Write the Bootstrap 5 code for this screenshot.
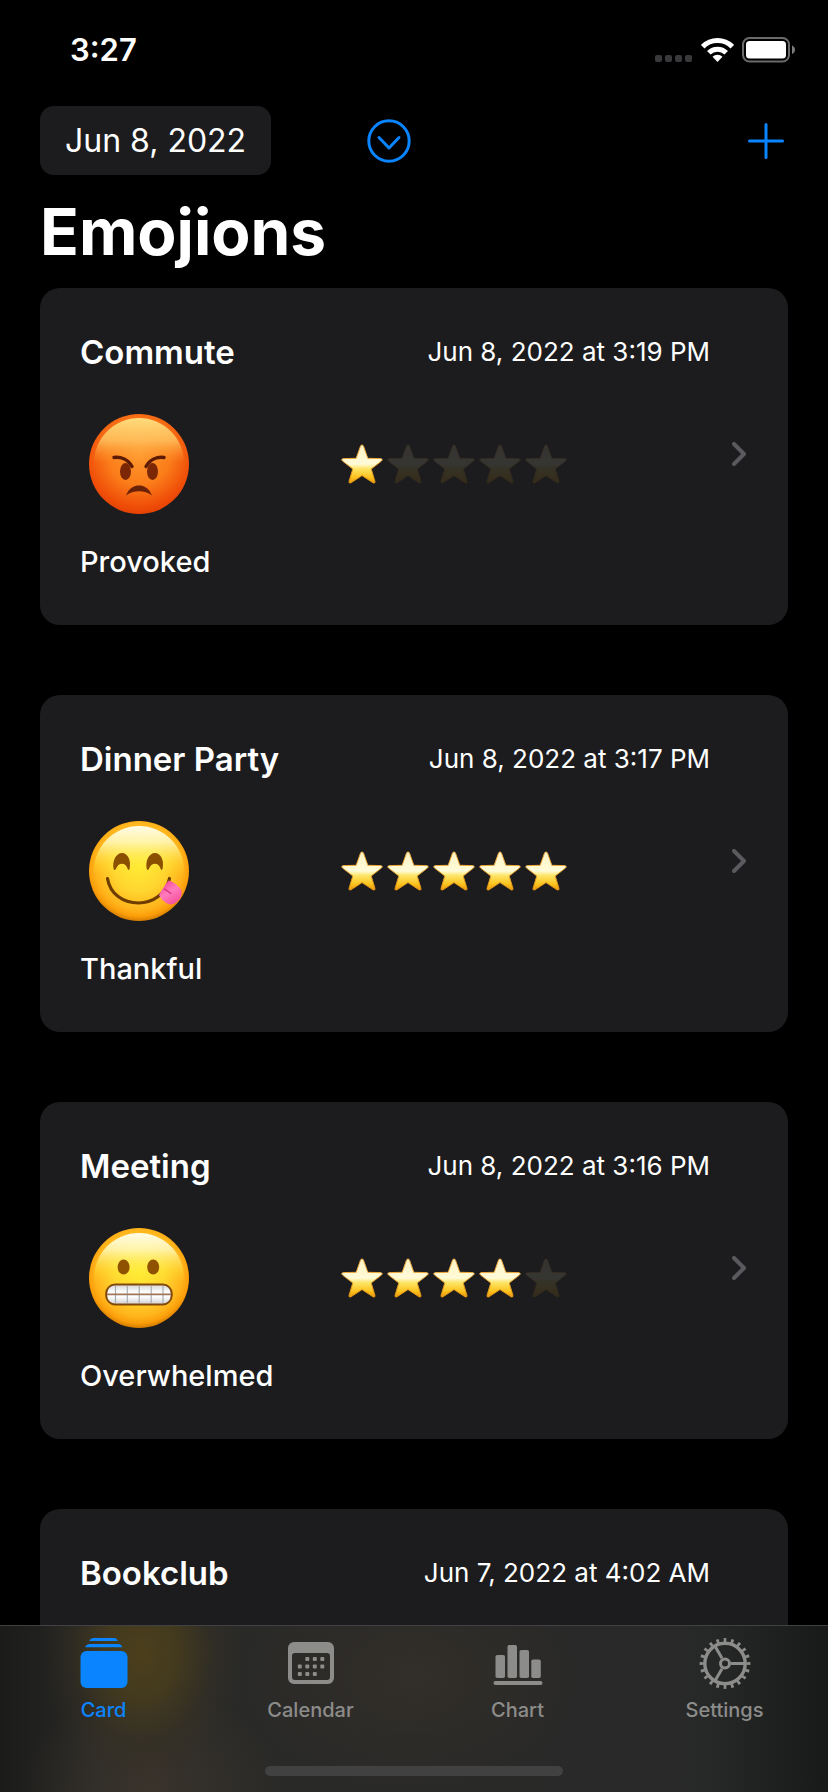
<!DOCTYPE html>
<html lang="en" data-bs-theme="dark">
<head>
<meta charset="utf-8">
<meta name="viewport" content="width=device-width, initial-scale=1">
<title>Emojions</title>
<link href="https://cdn.jsdelivr.net/npm/bootstrap@5.3.0/dist/css/bootstrap.min.css" rel="stylesheet">
<style>
  :root { --tint: #0a84ff; --panel: #1c1c1e; --muted: #8c8c8a; }
  body { background: #000; color: #fff; font-family: Inter, "Liberation Sans", sans-serif; }
  svg { display: block; flex: none; }
  .app { height: 100vh; }
  .statusbar { height: 100px; padding: 0 32px 0 70px; }
  .clock { font-size: 31px; line-height: 40px; }
  .toolbar { padding: 6px 40px 0; }
  .btn-date { background: var(--panel); color: #fff; font-size: 32px; line-height: 41px; padding: 14px 25px; border: 0; border-radius: 14px; }
  .btn-date:hover { background: #2c2c2e; color: #fff; }
  .btn-tint { color: var(--tint); border: 0; padding: 0; }
  .btn-expand { margin-left: 96px; }
  .page-title { font-size: 64px; line-height: 72px; padding: 21px 40px 20px; }
  .entries { min-height: 0; overflow-y: auto; gap: 70px; padding: 0 40px; scrollbar-width: none; }
  .entries::-webkit-scrollbar { display: none; }
  .entry { background: var(--panel); color: #fff; border-radius: 20px; padding: 40px 42px 45px 40px; gap: 22px; flex: none; }
  .entry-name { font-size: 33px; line-height: 48px; }
  .entry-time { font-size: 26px; line-height: 48px; }
  .entry-head-only { padding-right: 36px; padding-bottom: 24px; }
  .entry-body { margin: 28px 0 20px; }
  .entry-face { width: 118px; height: 120px; }
  .entry-mood { font-size: 29px; line-height: 36px; }
  .rating { gap: 4px; }
  .rating .off { opacity: .11; }
  .chev { color: #5a5a5e; }
  .tabbar {
    border-top: 1px solid #414143; padding-top: 12px; height: 167px; flex: none;
    background:
      radial-gradient(ellipse 100px 125px at 142px 28px, #4b3f1b, #493d1cd0 35%, #3a331f60 70%, #2a2a2800),
      radial-gradient(ellipse 130px 100px at 150px 160px, #39332b, #39332b00),
      radial-gradient(ellipse 170px 120px at 50% 50px, #322e28, #322e2800),
      linear-gradient(90deg, #1b1b1a, #2a2a28 13%, #292929 80%, #262827 86%, #181919);
  }
  .tab { color: var(--muted); font-size: 20px; line-height: 24px; gap: 8px; }
  .tab.active { color: var(--tint); }
  .home-bar { width: 36%; height: 10px; border-radius: 5px; background: #414141; margin-bottom: 16px; }
</style>
</head>
<body>
<svg width="0" height="0" class="position-absolute" aria-hidden="true">
  <defs>
    <linearGradient id="gStar" x1="0" y1="0" x2="0" y2="1">
      <stop offset="0" stop-color="#fff3c4"/><stop offset=".5" stop-color="#fffbd8"/><stop offset=".62" stop-color="#fde567"/><stop offset=".85" stop-color="#fcc21c"/><stop offset="1" stop-color="#e8960f"/>
    </linearGradient>
    <linearGradient id="gStarEdge" x1="0" y1="0" x2="0" y2="1">
      <stop offset="0" stop-color="#f5b04a"/><stop offset="1" stop-color="#e09413"/>
    </linearGradient>
    <radialGradient id="gYellow" cx=".5" cy=".45" r=".56">
      <stop offset="0" stop-color="#ffea35"/><stop offset=".45" stop-color="#ffd62f"/><stop offset=".78" stop-color="#ffb41c"/><stop offset=".9" stop-color="#fb9d08"/><stop offset="1" stop-color="#c97300"/>
    </radialGradient>
    <radialGradient id="gRed" cx=".5" cy=".4" r=".62">
      <stop offset="0" stop-color="#ff9a30"/><stop offset=".5" stop-color="#fb7d1a"/><stop offset=".85" stop-color="#ef4e08"/><stop offset="1" stop-color="#e33f02"/>
    </radialGradient>
    <linearGradient id="gShineY" x1="0" y1="0" x2="0" y2="1">
      <stop offset="0" stop-color="#fffde8"/><stop offset=".18" stop-color="#fffac0" stop-opacity=".85"/><stop offset=".45" stop-color="#fff23a" stop-opacity=".2"/><stop offset=".55" stop-color="#ffee30" stop-opacity="0"/>
    </linearGradient>
    <linearGradient id="gShineR" x1="0" y1="0" x2="0" y2="1">
      <stop offset="0" stop-color="#ffdc7c"/><stop offset=".25" stop-color="#ffc663" stop-opacity=".8"/><stop offset=".5" stop-color="#ff9a30" stop-opacity="0"/>
    </linearGradient>
    <linearGradient id="gTeeth" x1="0" y1="0" x2="0" y2="1">
      <stop offset="0" stop-color="#d5d5d8"/><stop offset=".4" stop-color="#fff"/><stop offset=".6" stop-color="#fff"/><stop offset="1" stop-color="#cfcfd2"/>
    </linearGradient>
    <linearGradient id="gTongue" x1="0" y1="0" x2=".6" y2="1">
      <stop offset="0" stop-color="#f0368c"/><stop offset=".55" stop-color="#ff7cbc"/><stop offset="1" stop-color="#f4549f"/>
    </linearGradient>
  </defs>
  <symbol id="star" viewBox="0 0 42 40">
    <path d="M21 1c.7 0 1.200.4 1.500 1.200L26.800 14.300 39.600 14.600c1.700.1 2.100 1.500.8 2.500L30.200 25l3.700 12.200c.5 1.600-.7 2.400-2 1.500L21 31.600 10.100 38.700c-1.300.9-2.500.1-2-1.500L11.800 25 1.600 17.100C.3 16.100.7 14.700 2.400 14.600L15.200 14.300 19.500 2.200C19.800 1.400 20.300 1 21 1Z" fill="url(#gStar)" stroke="url(#gStarEdge)" stroke-width="1"/>
  </symbol>
  <symbol id="chevron" viewBox="0 0 14 24">
    <path d="M2 2l10 10L2 22" fill="none" stroke="currentColor" stroke-width="4" stroke-linecap="round" stroke-linejoin="round"/>
  </symbol>
  <symbol id="face-angry" viewBox="0 0 100 100">
    <circle cx="50" cy="50" r="50" fill="url(#gRed)"/>
    <circle cx="50" cy="49" r="45" fill="url(#gShineR)"/>
    <ellipse cx="36.500" cy="57.500" rx="5.500" ry="8.500" fill="#7b2706"/>
    <ellipse cx="63.500" cy="57.500" rx="5.500" ry="8.500" fill="#7b2706"/>
    <path d="M25 43.500c7-1 14 2 18 9M75 43.500c-7-1-14 2-18 9" fill="none" stroke="#5e1b04" stroke-width="3.400" stroke-linecap="round"/>
    <path d="M37 81.500C40 74 45 71.500 50 71.500s10 2.500 13 10c-4-3-8-4.300-13-4.300s-9 1.300-13 4.300Z" fill="#6b2106"/>
  </symbol>
  <symbol id="face-yum" viewBox="0 0 100 100">
    <circle cx="50" cy="50" r="50" fill="url(#gYellow)"/>
    <circle cx="50" cy="50" r="45" fill="url(#gShineY)"/>
    <path d="M24.600 48C23 40 27 32 33 32s9.500 8 7.500 16c-.5 1.500-1.500 1-2-.4C37 41 29 41 27 47.800c-.5 1.400-2 1.600-2.400.2ZM57.800 48C56 40 60 32 66 32s9.500 8 7.500 16c-.5 1.500-1.500 1-2-.4C70 41 62 41 60 47.800c-.5 1.400-1.900 1.600-2.200.2Z" fill="#8a5000"/>
    <path d="M18.500 57.500C21 73 34 82 49.500 82 64 82 77 73 80.500 57.500" fill="none" stroke="#6f3d00" stroke-width="3.200" stroke-linecap="round"/>
    <path d="M79.500 59.500C83 60 92 66 92.700 70.500 93.500 76 88 83 82 83.500 77 83.500 72 78 70 74 72 70 76 64 79.500 59.500Z" fill="url(#gTongue)"/>
    <path d="M75.500 68l6.500 4.500" fill="none" stroke="#d92b7b" stroke-width="1.300" stroke-linecap="round"/>
  </symbol>
  <symbol id="face-grimace" viewBox="0 0 100 100">
    <circle cx="50" cy="50" r="50" fill="url(#gYellow)"/>
    <circle cx="50" cy="50" r="45" fill="url(#gShineY)"/>
    <ellipse cx="34.600" cy="39" rx="6" ry="7.500" fill="#8f5200"/>
    <ellipse cx="64.200" cy="39" rx="6" ry="7.500" fill="#8f5200"/>
    <rect x="17.200" y="56.500" width="65.500" height="20" rx="9" fill="url(#gTeeth)" stroke="#80480a" stroke-width="2"/>
    <path d="M26.500 58v17M38.300 58v17M50.200 58v17M62.200 58v17M74 58v17" stroke="#a3a8ae" stroke-width="1.100"/>
    <path d="M18 66.300h64" stroke="#a0765a" stroke-width="1.800"/>
  </symbol>
</svg>

<div class="app d-flex flex-column overflow-hidden">
  <header>
    <div class="statusbar d-flex align-items-center justify-content-between">
      <span class="clock fw-semibold">3:27</span>
      <div class="d-flex align-items-center gap-2">
        <svg width="38" height="24" viewBox="0 0 38 24" fill="#39393b" aria-hidden="true">
          <rect x="0" y="17" width="7" height="7" rx="2"/><rect x="10" y="17" width="7" height="7" rx="2"/><rect x="20" y="17" width="7" height="7" rx="2"/><rect x="30" y="17" width="7" height="7" rx="2"/>
        </svg>
        <svg width="33" height="24" viewBox="0 0 33 24" aria-hidden="true">
          <path d="M1.700 8.700a20.900 20.900 0 0 1 29.600 0M7.800 14.800a12.300 12.300 0 0 1 17.400 0" fill="none" stroke="#fff" stroke-width="5"/>
          <path d="M16.500 24l-5-5.200a7.200 7.200 0 0 1 10 0Z" fill="#fff"/>
        </svg>
        <svg width="54" height="26" viewBox="0 0 54 26" aria-hidden="true">
          <rect x="1" y="1" width="46" height="23.500" rx="6.500" fill="none" stroke="#6a6a6a" stroke-width="2"/>
          <rect x="4" y="4" width="40" height="17.500" rx="3.500" fill="#fff"/>
          <path d="M50 8.500c4 1.500 4 7 0 8.500Z" fill="#7c7c7c"/>
        </svg>
      </div>
    </div>
    <div class="toolbar d-flex align-items-center">
      <button type="button" class="btn btn-date">Jun 8, 2022</button>
      <button type="button" class="btn btn-tint btn-expand" aria-label="Show more">
        <svg width="44" height="44" viewBox="0 0 44 44" fill="none" stroke="currentColor" stroke-width="3" stroke-linecap="round" stroke-linejoin="round"><circle cx="22" cy="22" r="20.200"/><path d="M12 18.500l10 10.500 10-10.500"/></svg>
      </button>
      <button type="button" class="btn btn-tint ms-auto me-1" aria-label="Add">
        <svg width="36" height="36" viewBox="0 0 36 36" fill="none" stroke="currentColor" stroke-width="3" stroke-linecap="round"><path d="M18 1.500v33M1.500 18h33"/></svg>
      </button>
    </div>
    <h1 class="page-title fw-bold m-0">Emojions</h1>
  </header>

  <main class="entries d-flex flex-column flex-grow-1">
    <a href="#commute" class="entry d-flex align-items-center text-decoration-none">
      <div class="flex-grow-1">
        <div class="d-flex justify-content-between"><span class="entry-name fw-semibold">Commute</span><time class="entry-time">Jun 8, 2022 at 3:19 PM</time></div>
        <div class="entry-body d-flex align-items-center">
          <div class="entry-face d-flex align-items-center justify-content-center"><svg width="100" height="100"><use href="#face-angry"/></svg></div>
          <div class="rating d-flex flex-grow-1 justify-content-center" role="img" aria-label="1 of 5">
            <svg width="42" height="40"><use href="#star"/></svg><svg class="off" width="42" height="40"><use href="#star"/></svg><svg class="off" width="42" height="40"><use href="#star"/></svg><svg class="off" width="42" height="40"><use href="#star"/></svg><svg class="off" width="42" height="40"><use href="#star"/></svg>
          </div>
        </div>
        <div class="entry-mood fw-medium">Provoked</div>
      </div>
      <svg class="chev" width="14" height="24"><use href="#chevron"/></svg>
    </a>

    <a href="#dinner-party" class="entry d-flex align-items-center text-decoration-none">
      <div class="flex-grow-1">
        <div class="d-flex justify-content-between"><span class="entry-name fw-semibold">Dinner Party</span><time class="entry-time">Jun 8, 2022 at 3:17 PM</time></div>
        <div class="entry-body d-flex align-items-center">
          <div class="entry-face d-flex align-items-center justify-content-center"><svg width="100" height="100"><use href="#face-yum"/></svg></div>
          <div class="rating d-flex flex-grow-1 justify-content-center" role="img" aria-label="5 of 5">
            <svg width="42" height="40"><use href="#star"/></svg><svg width="42" height="40"><use href="#star"/></svg><svg width="42" height="40"><use href="#star"/></svg><svg width="42" height="40"><use href="#star"/></svg><svg width="42" height="40"><use href="#star"/></svg>
          </div>
        </div>
        <div class="entry-mood fw-medium">Thankful</div>
      </div>
      <svg class="chev" width="14" height="24"><use href="#chevron"/></svg>
    </a>

    <a href="#meeting" class="entry d-flex align-items-center text-decoration-none">
      <div class="flex-grow-1">
        <div class="d-flex justify-content-between"><span class="entry-name fw-semibold">Meeting</span><time class="entry-time">Jun 8, 2022 at 3:16 PM</time></div>
        <div class="entry-body d-flex align-items-center">
          <div class="entry-face d-flex align-items-center justify-content-center"><svg width="100" height="100"><use href="#face-grimace"/></svg></div>
          <div class="rating d-flex flex-grow-1 justify-content-center" role="img" aria-label="4 of 5">
            <svg width="42" height="40"><use href="#star"/></svg><svg width="42" height="40"><use href="#star"/></svg><svg width="42" height="40"><use href="#star"/></svg><svg width="42" height="40"><use href="#star"/></svg><svg class="off" width="42" height="40"><use href="#star"/></svg>
          </div>
        </div>
        <div class="entry-mood fw-medium">Overwhelmed</div>
      </div>
      <svg class="chev" width="14" height="24"><use href="#chevron"/></svg>
    </a>

    <a href="#bookclub" class="entry d-flex text-decoration-none">
      <div class="entry-head-only d-flex justify-content-between flex-grow-1"><span class="entry-name fw-semibold">Bookclub</span><time class="entry-time">Jun 7, 2022 at 4:02 AM</time></div>
    </a>
  </main>

  <nav class="tabbar d-flex flex-column justify-content-between align-items-center" aria-label="Sections">
    <div class="row g-0 w-100">
      <a href="#card" class="tab active fw-medium col d-flex flex-column align-items-center text-decoration-none" aria-current="page">
        <svg width="52" height="52" viewBox="0 0 52 52" fill="currentColor"><path d="M15.500 0h21c1.500 0 3 1.500 3.300 3h-28.600C11.500 1.500 14 0 15.500 0ZM11.500 6h29c1.700 0 3.500 1.500 3.700 3.300h-37C7.500 7.500 9.800 6 11.500 6Z"/><rect x="2.500" y="13" width="47" height="37" rx="6"/></svg>
        <span>Card</span>
      </a>
      <a href="#calendar" class="tab fw-medium col d-flex flex-column align-items-center text-decoration-none">
        <svg width="52" height="52" viewBox="0 0 52 52" fill="currentColor"><path fill-rule="evenodd" d="M9 4h34a6 6 0 0 1 6 6v30a6 6 0 0 1-6 6H9a6 6 0 0 1-6-6V10a6 6 0 0 1 6-6Zm1 11a3 3 0 0 0-3 3v21a3 3 0 0 0 3 3h32a3 3 0 0 0 3-3V18a3 3 0 0 0-3-3Z"/><g><rect x="20.300" y="19" width="4" height="4" rx="1"/><rect x="27.800" y="19" width="4" height="4" rx="1"/><rect x="35.300" y="19" width="4" height="4" rx="1"/><rect x="12.800" y="26.500" width="4" height="4" rx="1"/><rect x="20.300" y="26.500" width="4" height="4" rx="1"/><rect x="27.800" y="26.500" width="4" height="4" rx="1"/><rect x="35.300" y="26.500" width="4" height="4" rx="1"/><rect x="12.800" y="34" width="4" height="4" rx="1"/><rect x="20.300" y="34" width="4" height="4" rx="1"/><rect x="27.800" y="34" width="4" height="4" rx="1"/></g></svg>
        <span>Calendar</span>
      </a>
      <a href="#chart" class="tab fw-medium col d-flex flex-column align-items-center text-decoration-none">
        <svg width="52" height="52" viewBox="0 0 52 52" fill="currentColor"><rect x="3.500" y="17" width="9.500" height="23" rx="1.800"/><rect x="15.500" y="7" width="9.500" height="33" rx="1.800"/><rect x="27.500" y="12" width="9.500" height="28" rx="1.800"/><rect x="39.300" y="21.500" width="9.500" height="18.500" rx="1.800"/><rect x="1.500" y="43" width="49" height="4" rx="2"/></svg>
        <span>Chart</span>
      </a>
      <a href="#settings" class="tab fw-medium col d-flex flex-column align-items-center text-decoration-none">
        <svg width="52" height="52" viewBox="0 0 52 52" fill="none" stroke="currentColor"><circle cx="26" cy="25.500" r="20.200" stroke-width="3.400"/><circle cx="26" cy="25.500" r="23.300" stroke-width="4.200" pathLength="80" stroke-dasharray="1.500 2.500" stroke-dashoffset=".75"/><circle cx="26" cy="25.500" r="4.500" stroke-width="3"/><path d="M32 25.500h13M23 20.300L15.900 8M23 30.700L15.900 43" stroke-width="3"/></svg>
        <span>Settings</span>
      </a>
    </div>
    <div class="home-bar"></div>
  </nav>
</div>
<script src="https://cdn.jsdelivr.net/npm/bootstrap@5.3.0/dist/js/bootstrap.bundle.min.js"></script>
</body>
</html>
